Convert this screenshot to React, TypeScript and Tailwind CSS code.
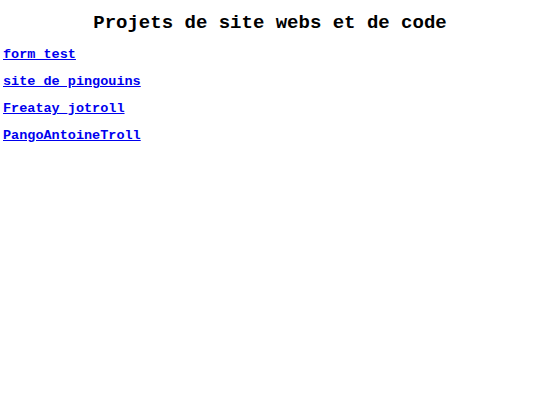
import React from 'react';

const projects = [
  { name: 'form test', href: '#form-test' },
  { name: 'site de pingouins', href: '#site-de-pingouins' },
  { name: 'Freatay_jotroll', href: '#freatay-jotroll' },
  { name: 'PangoAntoineTroll', href: '#pango-antoine-troll' },
];

export default function App() {
  return (
    <div className="min-h-[405px] bg-white text-black font-['Liberation_Mono',monospace]">
      <h1 className="pt-[9px] text-center text-[19px] font-bold leading-[29px]">
        Projets de site webs et de code
      </h1>
      <ul className="mt-[3px] pl-[3px]">
        {projects.map(({ name, href }) => (
          <li key={name} className="text-[13.5px] font-bold leading-[27px]">
            <a href={href} className="text-[#0000ee] underline">
              {name}
            </a>
          </li>
        ))}
      </ul>
    </div>
  );
}
